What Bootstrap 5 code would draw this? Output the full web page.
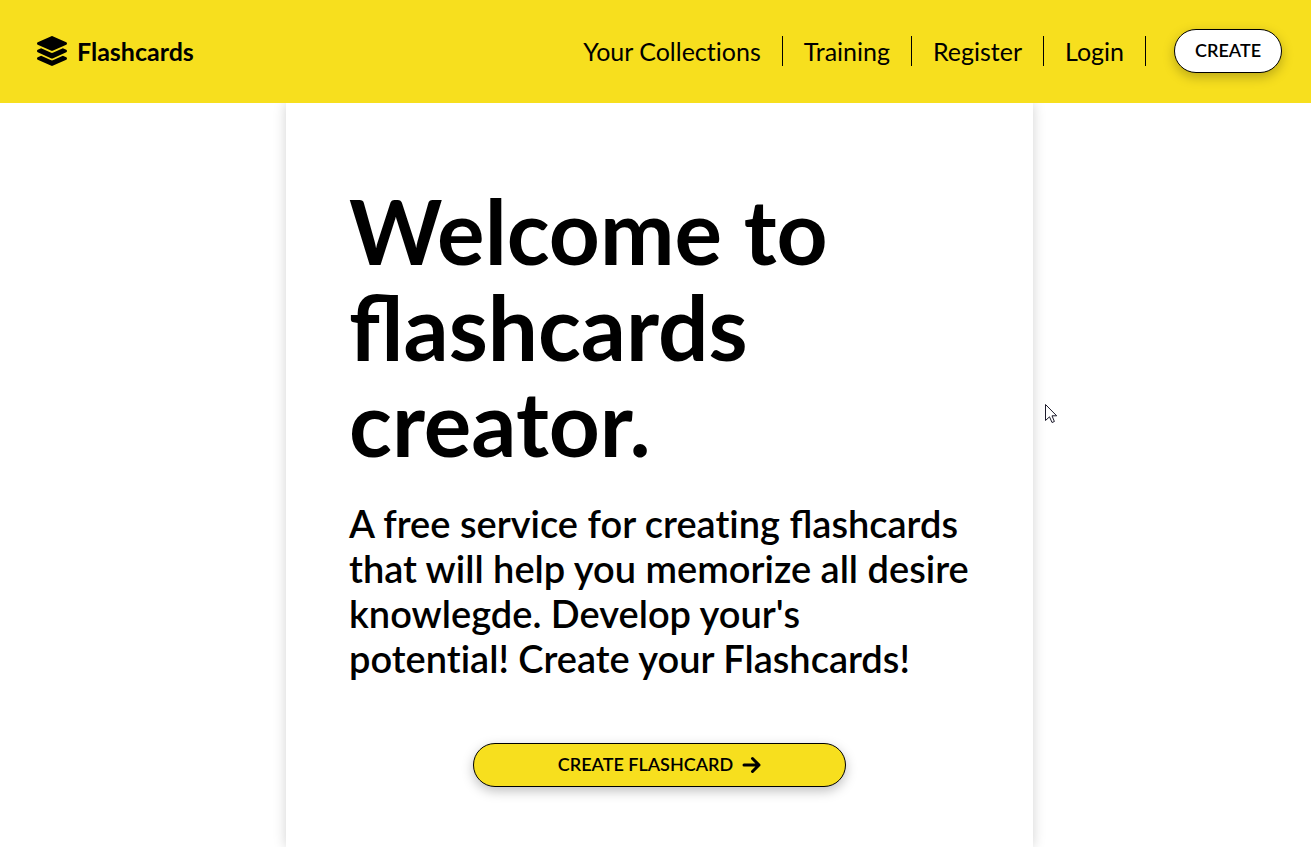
<!DOCTYPE html>
<html lang="en">
<head>
<meta charset="utf-8">
<meta name="viewport" content="width=device-width, initial-scale=1">
<title>Flashcards</title>
<link href="https://cdn.jsdelivr.net/npm/bootstrap@5.3.0/dist/css/bootstrap.min.css" rel="stylesheet">
<style>
  body { font-family: Lato, "Liberation Sans", sans-serif; color: #000; background: #fff; }
  .topbar { background: #f7df1e; padding: 29px 29px 30px 37px; }
  .brand { font-size: 25px; font-weight: 700; line-height: 30px; color: #000; gap: 10px; }
  .menu-link { font-size: 25px; line-height: 30px; padding: 0 21px; border-right: 1px solid #000; color: #000; }
  .pill { font-size: 18px; font-weight: 600; line-height: 20px; color: #000; border: 1px solid #000; padding: 10px 20px 12px; box-shadow: 0 4px 12px rgba(0,0,0,.25); }
  .pill-light, .pill-light:hover { background: #fff; color: #000; border-color: #000; }
  .pill-main, .pill-main:hover { background: #f7df1e; color: #000; border-color: #000; }
  .page-body { padding-left: 8px; }
  .sheet { width: 747px; max-width: 100%; min-height: calc(100vh - 103px); padding: 80px 0 60px; box-shadow: 0 0 12px rgba(0,0,0,.18); }
  .copy { padding: 0 63px; }
  .headline { font-size: 89px; line-height: 96px; font-weight: 700; margin-bottom: 30px; }
  .intro { font-size: 38px; line-height: 45px; font-weight: 600; margin-bottom: 62px; }
  .plain { font-variant-ligatures: none; }
  .pointer { left: 1045px; top: 403px; }
</style>
</head>
<body>
<header class="topbar position-relative z-1 d-flex align-items-center justify-content-between">
  <a class="brand d-flex align-items-center text-decoration-none" href="#">
    <svg width="30" height="30" viewBox="0 0 512 512" aria-hidden="true"><path d="M12.41 148.02l232.94 105.67c6.8 3.09 14.49 3.09 21.29 0l232.94-105.67c16.55-7.51 16.55-32.52 0-40.03L266.65 2.31a25.607 25.607 0 0 0-21.29 0L12.41 107.98c-16.55 7.51-16.55 32.53 0 40.04zm487.18 88.28l-58.09-26.33-161.64 73.27c-7.56 3.43-15.59 5.17-23.86 5.17s-16.29-1.74-23.86-5.17L70.51 209.97l-58.1 26.33c-16.55 7.5-16.55 32.5 0 40l232.94 105.59c6.8 3.08 14.49 3.08 21.29 0L499.59 276.3c16.55-7.5 16.55-32.5 0-40zm0 127.8l-57.87-26.23-161.86 73.37c-7.56 3.43-15.59 5.17-23.86 5.17s-16.29-1.74-23.86-5.17L70.29 337.87 12.41 364.1c-16.55 7.5-16.55 32.5 0 40l232.94 105.59c6.8 3.08 14.49 3.08 21.29 0L499.59 404.1c16.55-7.5 16.55-32.5 0-40z"/></svg>
    Flashcards
  </a>
  <nav class="d-flex align-items-center">
    <a class="menu-link plain text-decoration-none" href="#">Your Collections</a>
    <a class="menu-link text-decoration-none" href="#">Training</a>
    <a class="menu-link text-decoration-none" href="#">Register</a>
    <a class="menu-link text-decoration-none me-4" href="#">Login</a>
    <button type="button" class="btn pill pill-light rounded-pill ms-1">CREATE</button>
  </nav>
</header>
<main class="page-body">
  <section class="sheet mx-auto">
    <div class="copy">
      <h1 class="headline">Welcome to flashcards creator.</h1>
      <p class="intro">A free service for <span class="plain">creating</span> flashcards that will help you memorize all desire knowlegde. Develop your's<br><span class="plain">potential! Create your Flashcards!</span></p>
    </div>
    <button type="button" class="btn pill pill-main rounded-pill w-50 d-flex align-items-center justify-content-center mx-auto">
      CREATE FLASHCARD
      <svg class="ms-2" width="20" height="20" viewBox="0 0 20 20" fill="none" stroke="#000" stroke-width="3" stroke-linecap="round" stroke-linejoin="round" aria-hidden="true"><path d="M3 11H18M11.500 4.500L18 11L11.500 17.500"/></svg>
    </button>
  </section>
</main>
<svg class="pointer position-absolute" width="13" height="21" viewBox="0 0 13 21" aria-hidden="true"><path d="M.5 1.500V17.500L4.500 13.800L7 19.500L9.400 18.500L7 12.800H11.700Z" fill="#fff" stroke="#1c1a2b"/></svg>
<script src="https://cdn.jsdelivr.net/npm/bootstrap@5.3.0/dist/js/bootstrap.bundle.min.js"></script>
</body>
</html>
